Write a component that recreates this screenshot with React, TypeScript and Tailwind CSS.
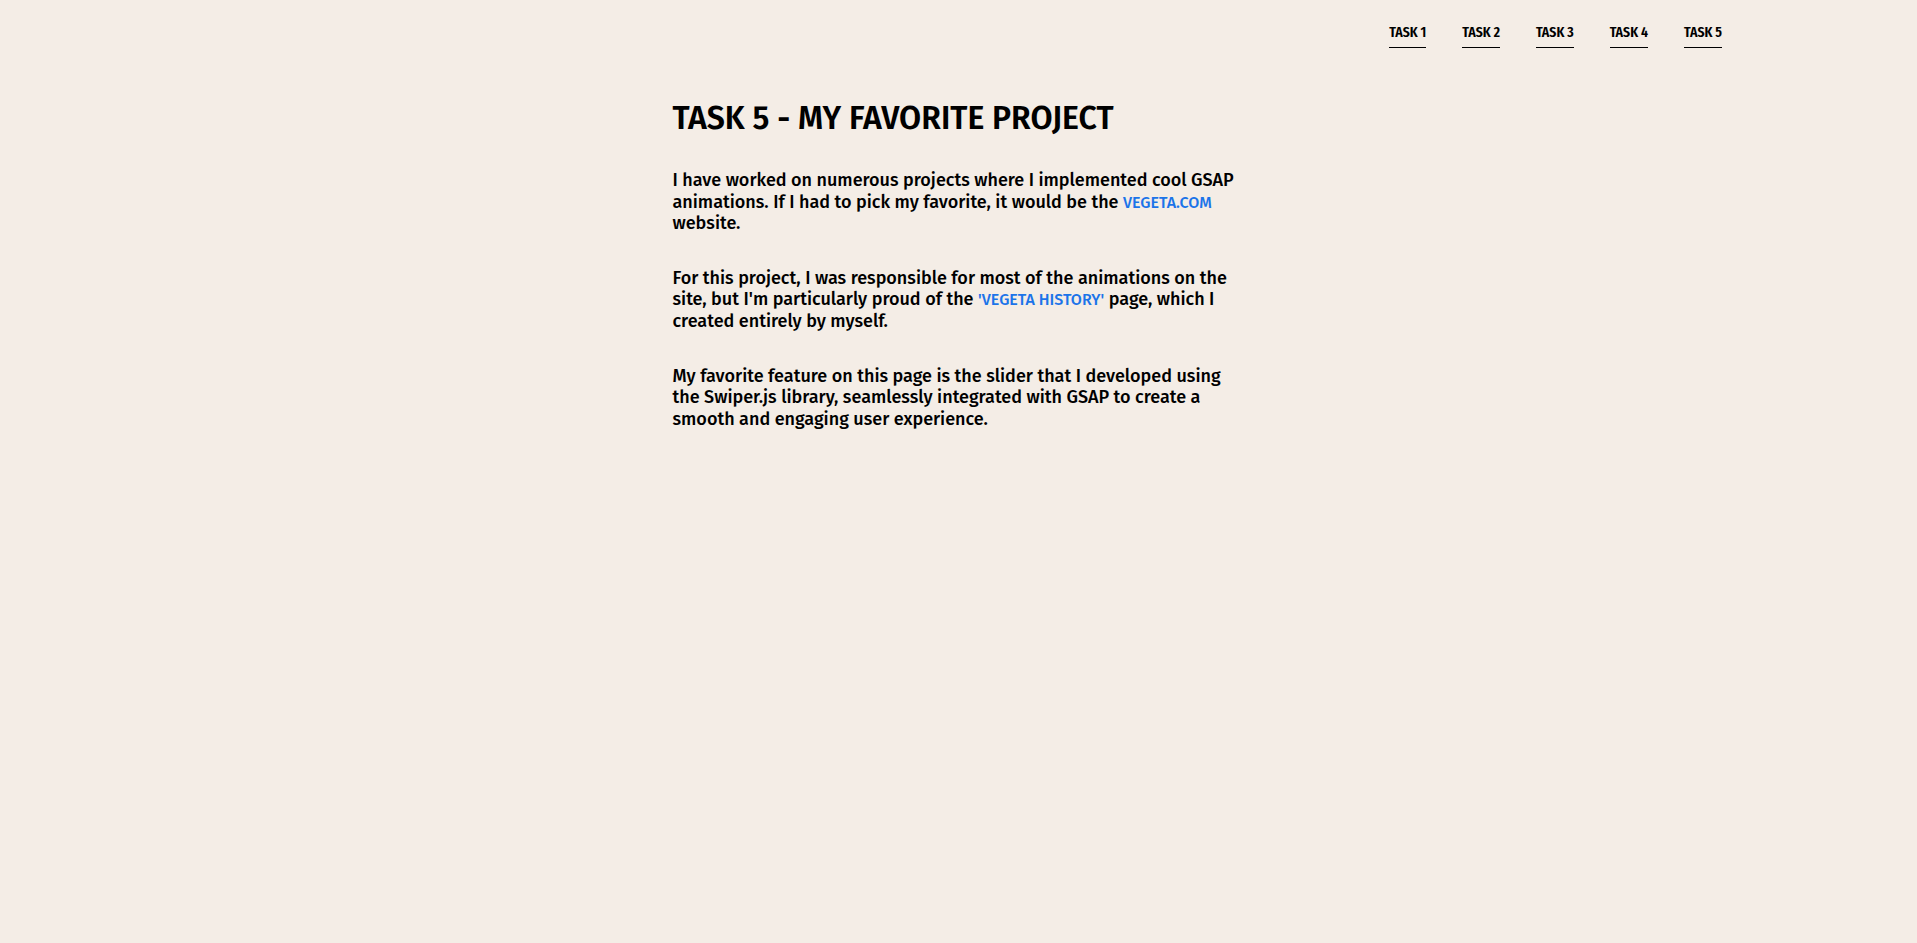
import React from "react";

const tasks = ["TASK 1", "TASK 2", "TASK 3", "TASK 4", "TASK 5"];

const Link = ({ children }: { children: React.ReactNode }) => (
  <a href="#" className="text-[16px] font-medium uppercase text-[#1c74e9]">
    {children}
  </a>
);

export default function App() {
  return (
    <div className="min-h-screen w-full bg-[#f4ede6] text-black font-['Fira_Sans',sans-serif]">
      {/* nav */}
      <nav className="flex justify-end gap-[36px] pr-[195px] pt-[25px]">
        {tasks.map((t) => (
          <a
            key={t}
            href="#"
            className="border-b border-black pb-[7px] text-[15px] font-semibold leading-none font-['Fira_Sans_Extra_Condensed','Roboto_Condensed',sans-serif]"
          >
            {t}
          </a>
        ))}
      </nav>

      {/* content */}
      <main className="mx-auto w-[572px] pt-[51px]">
        <h1 className="text-[32px] font-semibold leading-[38px]">
          TASK 5 - MY FAVORITE PROJECT
        </h1>

        <div className="mt-[33px] flex flex-col gap-[33px] text-[18px] font-medium leading-[21.6px]">
          <p>
            I have worked on numerous projects where I implemented cool GSAP animations. If I had to pick my favorite, it would be the <Link>vegeta.com</Link> website.
          </p>
          <p>
            For this project, I was responsible for most of the animations on the site, but I'm particularly proud of the <Link>'Vegeta History'</Link> page, which I created entirely by myself.
          </p>
          <p>
            My favorite feature on this page is the slider that I developed using the Swiper.js library, seamlessly integrated with GSAP to create a smooth and engaging user experience.
          </p>
        </div>
      </main>
    </div>
  );
}
